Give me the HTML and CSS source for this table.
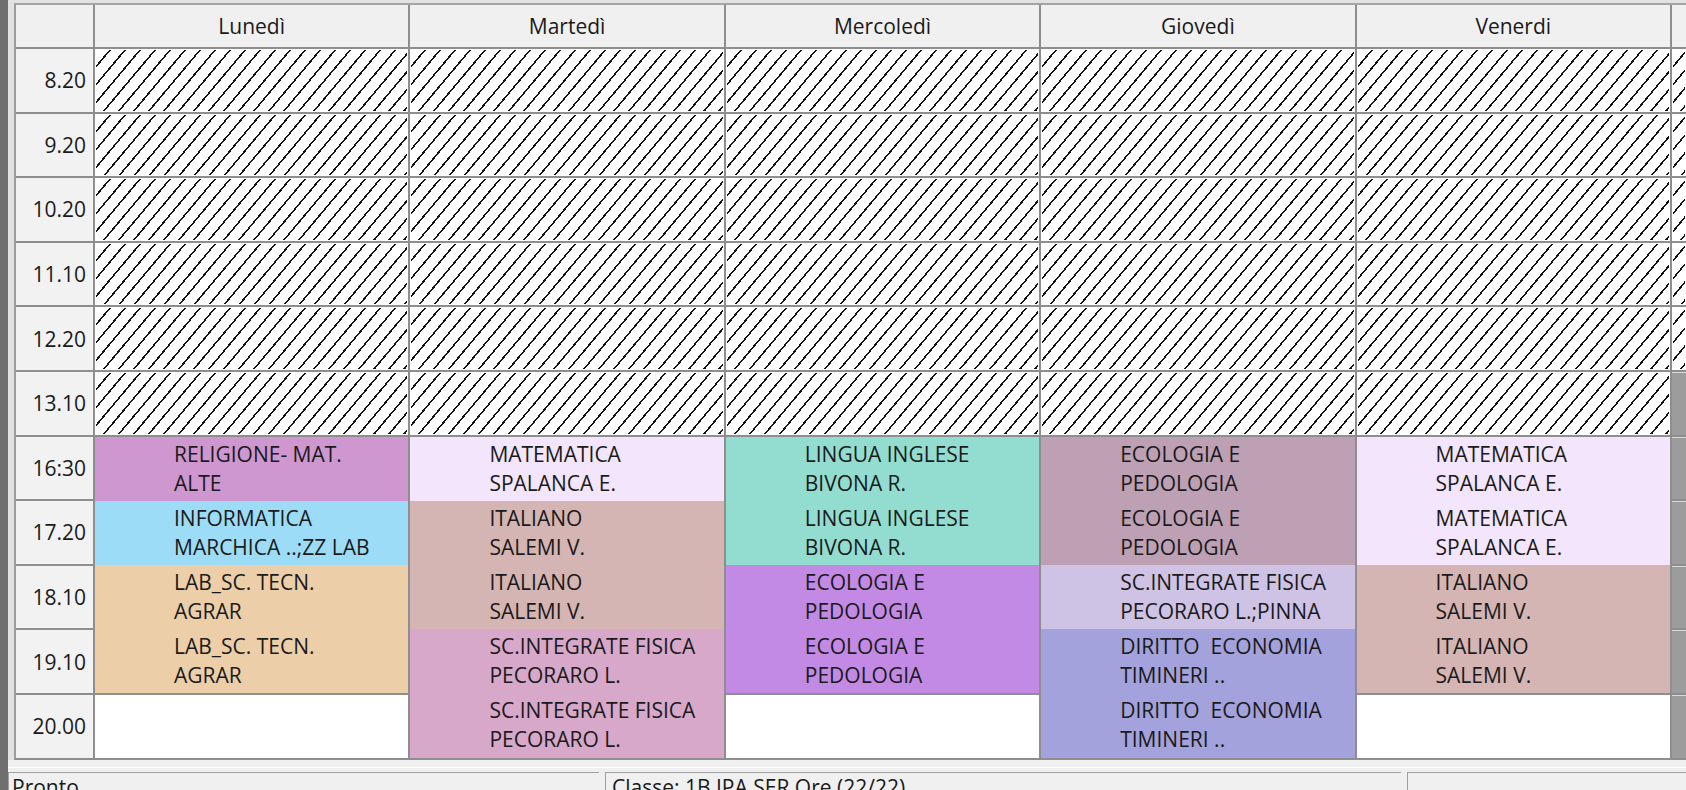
FILE: index.html
```html
<!DOCTYPE html>
<html lang="it">
<head>
<meta charset="utf-8">
<title>Orario</title>
<link rel="stylesheet" href="styles.css">
</head>
<body>
<div class="app">
  <div class="strip"></div>
  <div class="main">
    <div class="gridarea">
      <div class="grid">
        <div class="hd corner"></div>
        <div class="hd">Lunedì</div>
        <div class="hd">Martedì</div>
        <div class="hd">Mercoledì</div>
        <div class="hd">Giovedì</div>
        <div class="hd">Venerdi</div>
        <div class="hd"></div>

        <div class="time">8.20</div>
        <div class="hatch"></div><div class="hatch"></div><div class="hatch"></div><div class="hatch"></div><div class="hatch"></div><div class="hatch"></div>

        <div class="time">9.20</div>
        <div class="hatch"></div><div class="hatch"></div><div class="hatch"></div><div class="hatch"></div><div class="hatch"></div><div class="hatch"></div>

        <div class="time">10.20</div>
        <div class="hatch"></div><div class="hatch"></div><div class="hatch"></div><div class="hatch"></div><div class="hatch"></div><div class="hatch"></div>

        <div class="time">11.10</div>
        <div class="hatch"></div><div class="hatch"></div><div class="hatch"></div><div class="hatch"></div><div class="hatch"></div><div class="hatch"></div>

        <div class="time">12.20</div>
        <div class="hatch"></div><div class="hatch"></div><div class="hatch"></div><div class="hatch"></div><div class="hatch"></div><div class="hatch"></div>

        <div class="time">13.10</div>
        <div class="hatch"></div><div class="hatch"></div><div class="hatch"></div><div class="hatch"></div><div class="hatch"></div><div class="side"></div>

        <div class="time">16:30</div>
        <div class="day span4">
          <div class="les religione"><span>RELIGIONE- MAT.</span><span>ALTE</span></div>
          <div class="les informatica"><span>INFORMATICA</span><span>MARCHICA ..;ZZ LAB</span></div>
          <div class="les lab"><span>LAB_SC. TECN.</span><span>AGRAR</span></div>
          <div class="les lab"><span>LAB_SC. TECN.</span><span>AGRAR</span></div>
        </div>
        <div class="day span5">
          <div class="les mate"><span>MATEMATICA</span><span>SPALANCA E.</span></div>
          <div class="les ita"><span>ITALIANO</span><span>SALEMI V.</span></div>
          <div class="les ita"><span>ITALIANO</span><span>SALEMI V.</span></div>
          <div class="les fisica"><span>SC.INTEGRATE FISICA</span><span>PECORARO L.</span></div>
          <div class="les fisica"><span>SC.INTEGRATE FISICA</span><span>PECORARO L.</span></div>
        </div>
        <div class="day span4">
          <div class="les inglese"><span>LINGUA INGLESE</span><span>BIVONA R.</span></div>
          <div class="les inglese"><span>LINGUA INGLESE</span><span>BIVONA R.</span></div>
          <div class="les eco"><span>ECOLOGIA E</span><span>PEDOLOGIA</span></div>
          <div class="les eco"><span>ECOLOGIA E</span><span>PEDOLOGIA</span></div>
        </div>
        <div class="day span5">
          <div class="les eco2"><span>ECOLOGIA E</span><span>PEDOLOGIA</span></div>
          <div class="les eco2"><span>ECOLOGIA E</span><span>PEDOLOGIA</span></div>
          <div class="les fisica2"><span>SC.INTEGRATE FISICA</span><span>PECORARO L.;PINNA</span></div>
          <div class="les diritto"><span>DIRITTO  ECONOMIA</span><span>TIMINERI ..</span></div>
          <div class="les diritto"><span>DIRITTO  ECONOMIA</span><span>TIMINERI ..</span></div>
        </div>
        <div class="day span4">
          <div class="les mate"><span>MATEMATICA</span><span>SPALANCA E.</span></div>
          <div class="les mate"><span>MATEMATICA</span><span>SPALANCA E.</span></div>
          <div class="les ita"><span>ITALIANO</span><span>SALEMI V.</span></div>
          <div class="les ita"><span>ITALIANO</span><span>SALEMI V.</span></div>
        </div>
        <div class="side"></div>

        <div class="time">17.20</div>
        <div class="side"></div>

        <div class="time">18.10</div>
        <div class="side"></div>

        <div class="time">19.10</div>
        <div class="side"></div>

        <div class="time">20.00</div>
        <div class="empty"></div>
        <div class="empty"></div>
        <div class="empty"></div>
        <div class="side"></div>
      </div>
    </div>
    <div class="status">
      <div class="panel p1">Pronto</div>
      <div class="panel p2">Classe: 1B IPA SER Ore (22/22)</div>
      <div class="panel p3"></div>
    </div>
  </div>
</div>
</body>
</html>
```

FILE: styles.css
```css
html, body {
  margin: 0;
  padding: 0;
}
body {
  width: 1686px;
  height: 790px;
  overflow: hidden;
  background: #f0f0f0;
  font-family: "Open Sans", "Noto Sans", sans-serif;
  font-size: 21px;
  color: #1a1a1a;
}
.app {
  display: flex;
  height: 790px;
}
.strip {
  width: 8px;
  flex: none;
  background: #6f6f6f;
}
.main {
  flex: 1;
  display: flex;
  flex-direction: column;
  overflow: hidden;
  min-width: 0;
}
.gridarea {
  padding: 3px 0 0 6px;
  background: #e2e2e2;
}
.grid {
  display: grid;
  grid-template-columns: 77px repeat(5, 313.4px) 14px;
  grid-template-rows: 42px repeat(11, 62.6px);
  gap: 2px;
  background: #8e8e8e;
  border-left: 2px solid #9c9c9c;
  border-top: 2px solid #a4a4a4;
  border-bottom: 2px solid #8e8e8e;
  width: max-content;
}
.hd {
  background: #f0f0f0;
  display: flex;
  align-items: center;
  justify-content: center;
  white-space: nowrap;
}
.time {
  background: #f2f2f2;
  display: flex;
  align-items: center;
  justify-content: flex-end;
  padding-right: 7px;
}
.hatch {
  padding: 1px;
  background:
    repeating-linear-gradient(130deg,
      transparent 0, transparent 9.9px,
      #141414 9.9px, #141414 11.5px) content-box,
    #ffffff;
}
.side {
  background: #9c9c9c;
  box-shadow: inset 0 1px 0 #d8d8d8;
}
.empty {
  background: #ffffff;
}
.span4 { grid-row: span 4; }
.span5 { grid-row: span 5; }
.day {
  display: flex;
  flex-direction: column;
}
.les {
  flex: 1;
  display: flex;
  flex-direction: column;
  justify-content: center;
  padding-left: 79px;
  line-height: 29px;
  white-space: pre;
}
.religione { background: #cf97cf; }
.informatica { background: #9cdcf6; }
.lab { background: #eccfa9; }
.mate { background: #f3e5fb; }
.ita { background: #d5b4b4; }
.fisica { background: #d7a8c9; }
.inglese { background: #93ddd0; }
.eco { background: #c28ae4; }
.eco2 { background: #bda0b4; }
.fisica2 { background: #cec2e5; }
.diritto { background: #a3a2dc; }

.status {
  margin-top: 7px;
  display: flex;
  gap: 6px;
  background: #f0f0f0;
  flex: 1;
  border-top: 1px solid #ffffff;
}
.panel {
  margin-top: 4px;
  border-top: 1px solid #a0a0a0;
  border-left: 1px solid #a0a0a0;
  padding: 0 0 0 3px;
  line-height: 28px;
  white-space: nowrap;
}
.p1 { width: 587px; flex: none; }
.p2 { width: 789px; flex: none; padding-left: 6px; }
.p3 { flex: 1; }
```
